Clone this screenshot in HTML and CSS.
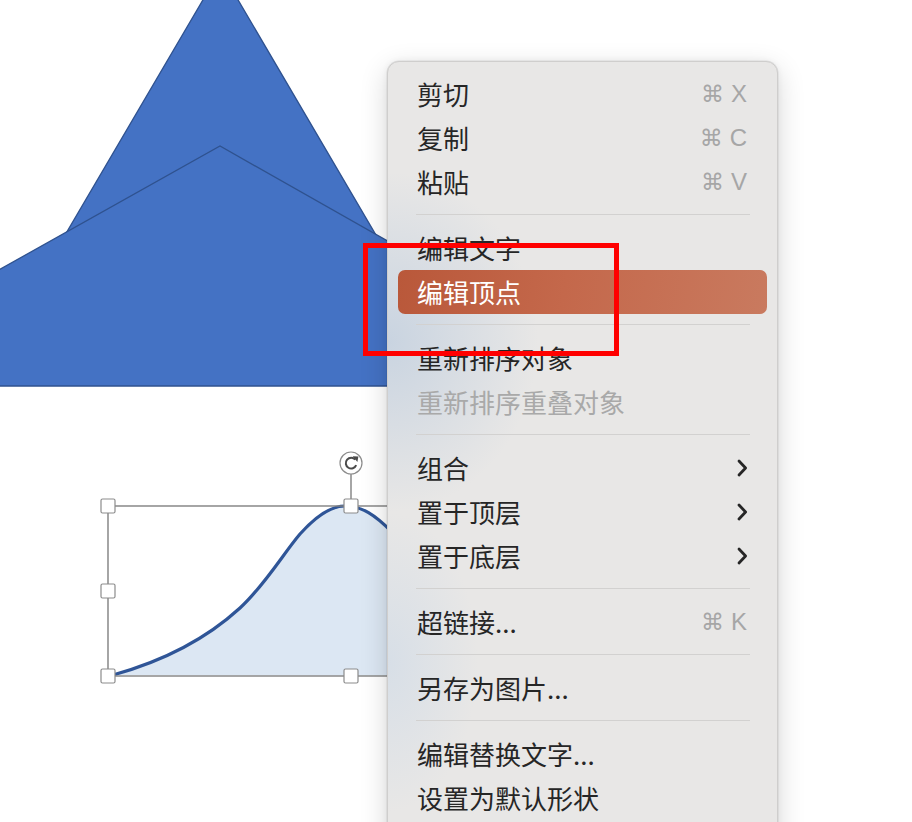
FILE: index.html
```html
<!DOCTYPE html>
<html lang="zh-CN">
<head>
<meta charset="utf-8">
<title>编辑顶点</title>
<link rel="stylesheet" href="styles.css">
</head>
<body>
<div class="stage">
  <svg class="art" width="912" height="822" viewBox="0 0 912 822" xmlns="http://www.w3.org/2000/svg">
    <polygon points="220.5,-30 -20,380 461,380" fill="#4472c4" stroke="#2f528f" stroke-width="1.3"/>
    <polygon points="-12,276 220,146 460,282 460,386 -12,386" fill="#4472c4" stroke="#2f528f" stroke-width="1.3"/>
    <path d="M113,675 C160,662 205,640 240,608 C265,585 283,554 300,534 C317,515 331,506 345,506 C362,506 375,515 392,532 C440,585 520,660 594,676 Z" fill="#dce7f3"/>
    <path d="M113,675 C160,662 205,640 240,608 C265,585 283,554 300,534 C317,515 331,506 345,506 C362,506 375,515 392,532" fill="none" stroke="#2f5597" stroke-width="3.2" stroke-linecap="round"/>
    <rect x="108" y="506" width="486" height="170" fill="none" stroke="#808080" stroke-width="1.4"/>
    <line x1="351" y1="474" x2="351" y2="499" stroke="#808080" stroke-width="1.4"/>
    <circle cx="351" cy="463" r="11" fill="#fff" stroke="#8c8c8c" stroke-width="1.2"/>
    <path d="M355.3,459.6 A5.4,5.4 0 1 0 356.2,465.2" fill="none" stroke="#4a4a4a" stroke-width="2"/>
    <polygon points="352.6,456.2 358.4,456.4 357.4,462" fill="#4a4a4a"/>
    <g fill="#fff" stroke="#8c8c8c" stroke-width="1.2">
      <rect x="101" y="499" width="14" height="14" rx="1.5"/>
      <rect x="344" y="499" width="14" height="14" rx="1.5"/>
      <rect x="101" y="584" width="14" height="14" rx="1.5"/>
      <rect x="101" y="669" width="14" height="14" rx="1.5"/>
      <rect x="344" y="669" width="14" height="14" rx="1.5"/>
    </g>
  </svg>

  <div class="menu">
    <div class="item"><span class="label">剪切</span><span class="shortcut"><span class="cmd">⌘</span><span class="key">X</span></span></div>
    <div class="item"><span class="label">复制</span><span class="shortcut"><span class="cmd">⌘</span><span class="key">C</span></span></div>
    <div class="item"><span class="label">粘贴</span><span class="shortcut"><span class="cmd">⌘</span><span class="key">V</span></span></div>
    <div class="sep"></div>
    <div class="item"><span class="label">编辑文字</span></div>
    <div class="item active"><span class="label">编辑顶点</span></div>
    <div class="sep"></div>
    <div class="item"><span class="label">重新排序对象</span></div>
    <div class="item disabled"><span class="label">重新排序重叠对象</span></div>
    <div class="sep"></div>
    <div class="item"><span class="label">组合</span><svg class="chev" width="11" height="18" viewBox="0 0 11 18"><path d="M2,2 L8.6,9 L2,16" fill="none" stroke="#262626" stroke-width="2.8" stroke-linecap="round" stroke-linejoin="round"/></svg></div>
    <div class="item"><span class="label">置于顶层</span><svg class="chev" width="11" height="18" viewBox="0 0 11 18"><path d="M2,2 L8.6,9 L2,16" fill="none" stroke="#262626" stroke-width="2.8" stroke-linecap="round" stroke-linejoin="round"/></svg></div>
    <div class="item"><span class="label">置于底层</span><svg class="chev" width="11" height="18" viewBox="0 0 11 18"><path d="M2,2 L8.6,9 L2,16" fill="none" stroke="#262626" stroke-width="2.8" stroke-linecap="round" stroke-linejoin="round"/></svg></div>
    <div class="sep"></div>
    <div class="item"><span class="label">超链接...</span><span class="shortcut"><span class="cmd">⌘</span><span class="key">K</span></span></div>
    <div class="sep"></div>
    <div class="item"><span class="label">另存为图片...</span></div>
    <div class="sep"></div>
    <div class="item"><span class="label">编辑替换文字...</span></div>
    <div class="item"><span class="label">设置为默认形状</span></div>
  </div>

  <div class="callout"></div>
</div>
</body>
</html>
```

FILE: styles.css
```css
html, body {
  margin: 0;
  padding: 0;
  background: #ffffff;
}

.stage {
  position: relative;
  width: 912px;
  height: 822px;
  overflow: hidden;
  background: #ffffff;
  font-family: "Noto Sans CJK SC", "Noto Sans", sans-serif;
}

.art {
  position: absolute;
  left: 0;
  top: 0;
  display: block;
}

.menu {
  position: absolute;
  left: 387px;
  top: 61px;
  width: 391px;
  height: 820px;
  box-sizing: border-box;
  padding: 10px 10px;
  border: 1px solid #cfcecd;
  border-radius: 12px;
  background-color: #e8e7e6;
  background-image:
    radial-gradient(ellipse 150px 170px at 0px 280px, rgba(150, 180, 215, 0.38), rgba(150, 180, 215, 0) 100%),
    radial-gradient(ellipse 90px 150px at 0px 600px, rgba(190, 210, 232, 0.4), rgba(190, 210, 232, 0) 100%);
  box-shadow: 0 0 0 0.5px rgba(0, 0, 0, 0.08), 0 8px 28px rgba(0, 0, 0, 0.16), 0 0 6px rgba(0, 0, 0, 0.06);
}

.item {
  height: 44px;
  display: flex;
  align-items: center;
  justify-content: space-between;
  padding: 0 20px 0 19px;
  border-radius: 7px;
  font-size: 26px;
  color: #262626;
  white-space: nowrap;
}

.label {
  line-height: 44px;
}

.item.active {
  background: linear-gradient(100deg, #b9583a 0%, #c4684b 45%, #c97a5f 100%);
  color: #ffffff;
}

.item.disabled {
  color: #a9a9a9;
}

.shortcut {
  display: flex;
  align-items: center;
  gap: 7px;
  color: #a6a6a6;
}

.cmd {
  font-family: "DejaVu Sans", sans-serif;
  font-size: 23px;
}

.key {
  font-family: "Liberation Sans", sans-serif;
  font-size: 24px;
}

.chev {
  display: block;
  margin-right: -1px;
}

.sep {
  height: 1px;
  margin: 10px 17px 11px 18px;
  background: #d2d1d0;
}

.callout {
  position: absolute;
  left: 363px;
  top: 243px;
  width: 256px;
  height: 113px;
  box-sizing: border-box;
  border: 5px solid #ff0000;
}
```
